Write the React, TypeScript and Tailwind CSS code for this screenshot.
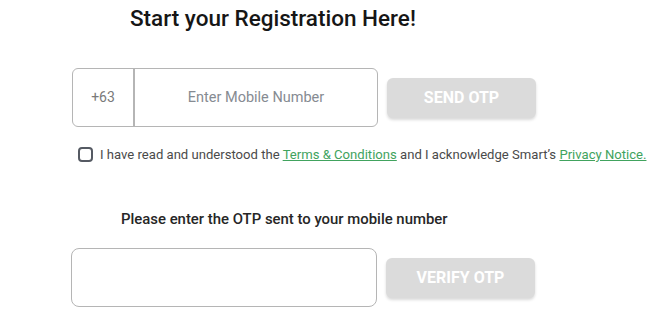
import { useState } from "react";

export default function App() {
  const [agree, setAgree] = useState(false);

  return (
    <div className="h-[321px] w-[656px] bg-white font-['Roboto',sans-serif]">
      <div className="flex flex-col pt-[5px]">
        {/* Titulo */}
        <h1 className="ml-[130px] text-[22.5px] font-medium leading-[26px] text-[#161616]">
          Start your Registration Here!
        </h1>

        {/* Numero de celular */}
        <div className="mt-[37px] ml-[72px] flex items-center gap-[9px]">
          <div className="flex h-[59px] w-[306px] rounded-[6px] border border-[#b5b5b5]">
            <div className="flex w-[62px] items-center justify-center border-r-2 border-[#b5b5b5] text-[14px] text-[#7a7a7a]">
              +63
            </div>
            <input
              type="tel"
              placeholder="Enter Mobile Number"
              className="min-w-0 flex-1 bg-transparent text-center text-[14.5px] text-[#333] outline-none placeholder:text-[#868b92]"
            />
          </div>
          <button
            type="button"
            disabled
            className="h-[40px] w-[149px] rounded-[6px] bg-[#dbdbdb] text-[16px] font-bold text-white shadow-[0_2px_3px_rgba(0,0,0,0.15)]"
          >
            SEND OTP
          </button>
        </div>

        {/* Termos */}
        <label className="mt-[18px] ml-[78px] flex items-center gap-[7px] text-[13.1px] text-[#4a4a4a]">
          <input
            type="checkbox"
            checked={agree}
            onChange={(e) => setAgree(e.target.checked)}
            className="h-[15px] w-[15px] appearance-none rounded-[4px] border-2 border-[#555a63] checked:bg-[#555a63]"
          />
          <span>
            I have read and understood the{" "}
            <a href="#" className="text-[#41a35e] underline">
              Terms &amp; Conditions
            </a>{" "}
            and I acknowledge Smart’s{" "}
            <a href="#" className="text-[#41a35e] underline">
              Privacy Notice.
            </a>
          </span>
        </label>

        {/* OTP */}
        <p className="mt-[43px] ml-[121px] text-[14.9px] font-medium text-[#262626]">
          Please enter the OTP sent to your mobile number
        </p>

        <div className="mt-[18px] ml-[71px] flex items-center gap-[9px]">
          <input
            type="text"
            className="h-[59px] w-[306px] rounded-[8px] border border-[#b5b5b5] px-3 text-[14px] outline-none"
          />
          <button
            type="button"
            disabled
            className="h-[40px] w-[149px] rounded-[6px] bg-[#dbdbdb] text-[16px] font-bold text-white shadow-[0_2px_3px_rgba(0,0,0,0.15)]"
          >
            VERIFY OTP
          </button>
        </div>
      </div>
    </div>
  );
}
